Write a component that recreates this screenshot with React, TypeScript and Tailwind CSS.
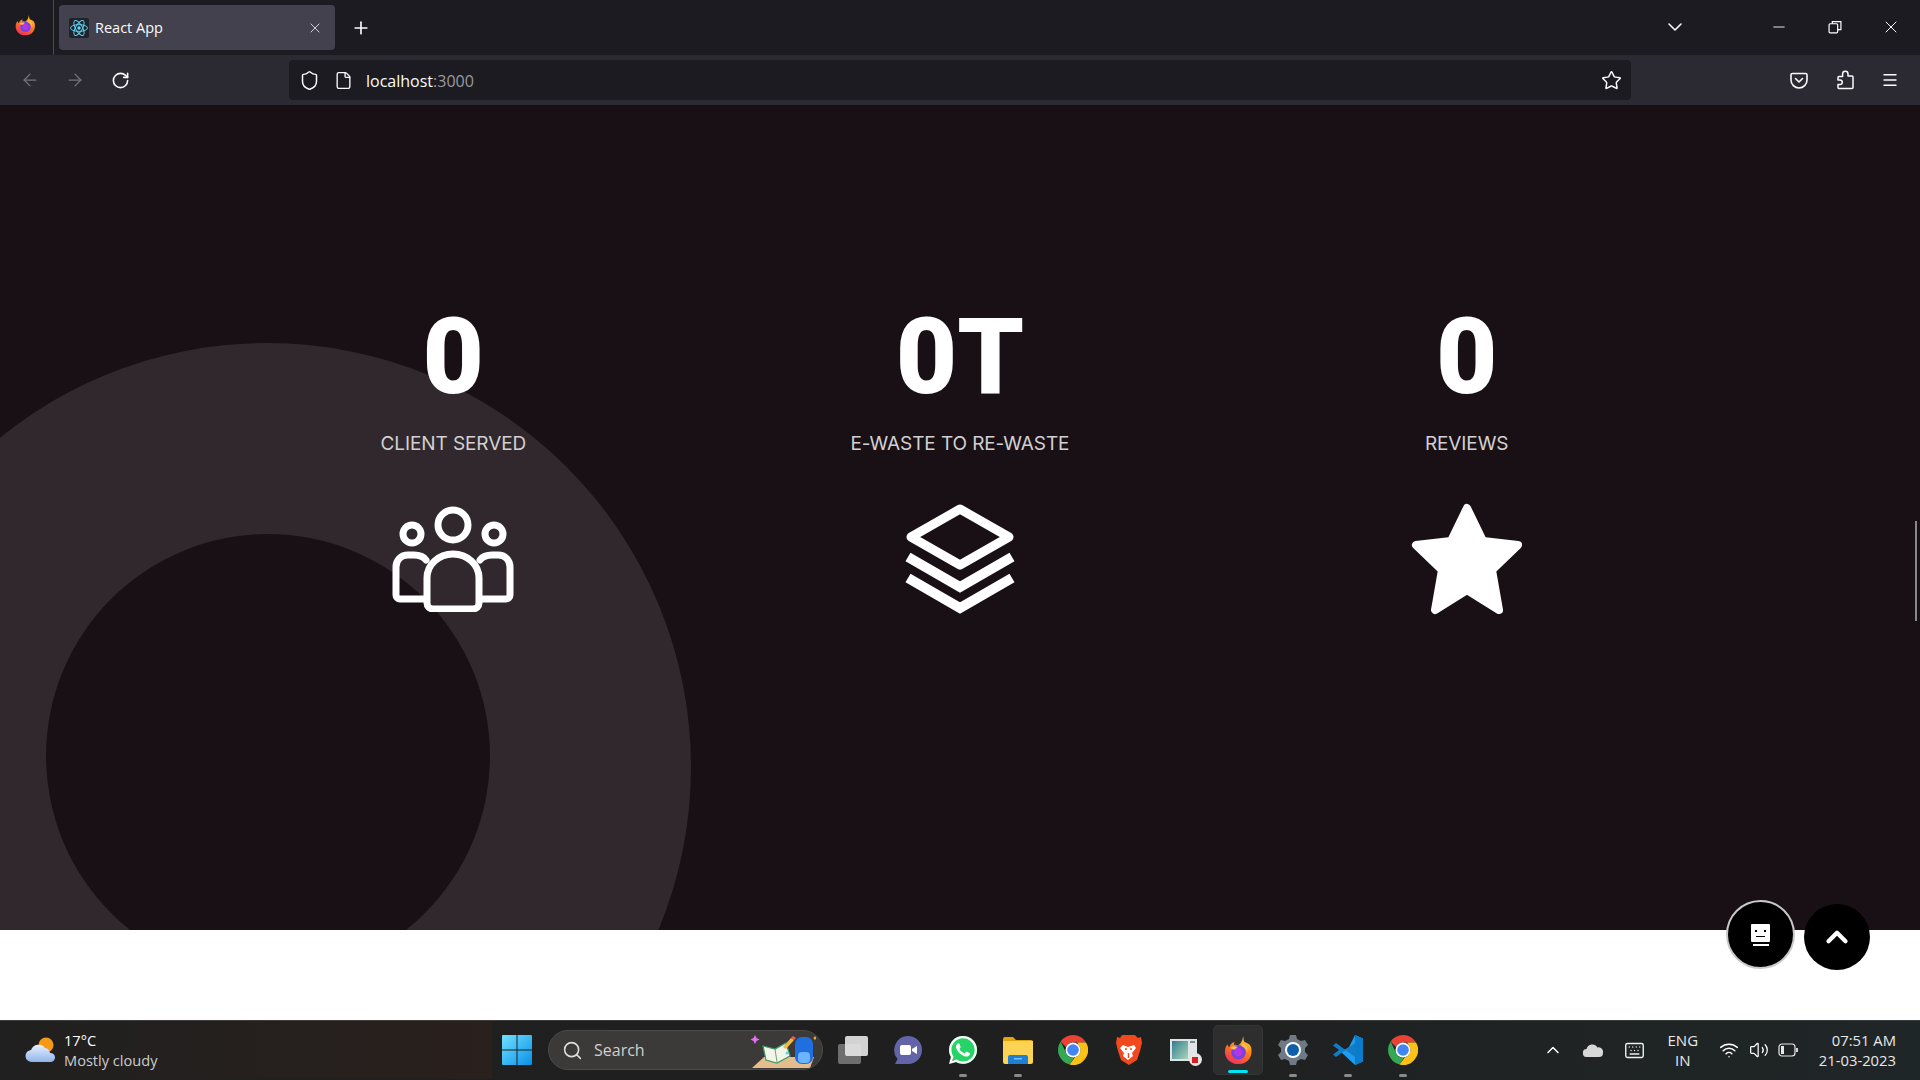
import { ArrowLeft, ArrowRight, RotateCw, Shield, File, Star, Menu, ChevronDown, ChevronUp, X, Minus, Plus, Search, Keyboard, Wifi, Volume2 } from 'lucide-react'
import { FaWhatsapp } from 'react-icons/fa'

function FirefoxLogo({ size = 20 }: { size?: number }) {
  return (
    <svg width={size} height={size} viewBox="0 0 32 32">
      <defs>
        <linearGradient id="ffa" x1="0.7" y1="0" x2="0.2" y2="1">
          <stop offset="0" stopColor="#ffd43b" />
          <stop offset="0.45" stopColor="#ff7a1a" />
          <stop offset="1" stopColor="#f0285f" />
        </linearGradient>
      </defs>
      <path d="M21 0c1 3 0 5 2 7 3 1 6 2 7 6 2 9-3 18-14 18C7 31 1 25 1 17c0-3 1-6 3-8 0 2 1 3 2 3 1-3 3-5 6-5-1 1-1 2-1 3 2-1 3 0 5 0 3-2 5-6 5-10z" fill="url(#ffa)" />
      <circle cx="16" cy="18" r="8" fill="#7542e5" />
      <circle cx="16" cy="18" r="4.5" fill="#b833e1" />
      <path d="M7 13c3-2 6-2 8-1l-3 3c-2 0-4 0-5-2z" fill="#ffbd4f" />
      <path d="M21 8c4 2 6 6 5 11-1-4-3-7-7-8z" fill="#ffbd4f" />
    </svg>
  )
}

function ReactIcon() {
  return (
    <svg width={20} height={20} viewBox="0 0 20 20" className="rounded-[2px] bg-[#20232a]">
      <circle cx="10" cy="10" r="1.7" fill="#61dafb" />
      <g fill="none" stroke="#61dafb" strokeWidth="0.9">
        <ellipse cx="10" cy="10" rx="8.5" ry="3.4" />
        <ellipse cx="10" cy="10" rx="8.5" ry="3.4" transform="rotate(60 10 10)" />
        <ellipse cx="10" cy="10" rx="8.5" ry="3.4" transform="rotate(120 10 10)" />
      </g>
    </svg>
  )
}

function ChromeLogo() {
  return (
    <svg width={30} height={30} viewBox="0 0 30 30">
      <path d="M15 0a15 15 0 0 1 13 7.5H15a7.5 7.5 0 0 0-7 4.7L2.700 6.500A15 15 0 0 1 15 0z" fill="#ea4335" />
      <path d="M2.700 6.500 8.500 18.700a7.500 7.500 0 0 0 7.700 3.800L11.500 29.600A15 15 0 0 1 2.700 6.500z" fill="#34a853" />
      <path d="M28 7.500A15 15 0 0 1 11.500 29.600l5.500-7.400a7.500 7.500 0 0 0 4.500-10.700L19 7.500z" fill="#fbc116" />
      <circle cx="15" cy="15" r="7.500" fill="#fff" />
      <circle cx="15" cy="15" r="5.800" fill="#4285f4" />
    </svg>
  )
}

function Dock({ children, dot }: { children: React.ReactNode; dot?: boolean }) {
  return (
    <div className="relative flex h-[50px] w-[50px] items-center justify-center">
      {children}
      {dot && <span className="absolute bottom-[-2px] h-[3px] w-[8px] rounded-full bg-[#8a8a8a]" />}
    </div>
  )
}

function SearchArt() {
  return (
    <svg width={66} height={36} viewBox="0 0 66 36" className="shrink-0">
      <path d="M2 36 14 25h50l-4 11z" fill="#e3bd8e" />
      <path d="M13 14l12 3 11-6 4 13-13 7-11-3z" fill="#f2f5ea" stroke="#3f9b63" strokeWidth="1.200" />
      <path d="M25 17l2 13" stroke="#7a9a80" />
      <path d="M33 15l8-9 3 2-8 9z" fill="#f8b73e" />
      <path d="M41 6l2-2 3 2-2 2z" fill="#ef5b4c" />
      <path d="M5 3l1.500 3 3 1.500-3 1.500L5 12 3.500 9 .5 7.500l3-1.500z" fill="#e56ff2" />
      <rect x="45" y="5" width="18" height="27" rx="7" fill="#1f6fe0" />
      <rect x="48" y="20" width="12" height="11" rx="4" fill="#6bb4ff" />
      <circle cx="37" cy="21" r="1.500" fill="#62d6e8" />
      <circle cx="65" cy="6" r="1.500" fill="#f5a623" />
    </svg>
  )
}

const stats = [
  { value: '0', label: 'CLIENT SERVED', icon: 'users' },
  { value: '0T', label: 'E-WASTE TO RE-WASTE', icon: 'layers' },
  { value: '0', label: 'REVIEWS', icon: 'star' },
]

function StatIcon({ name }: { name: string }) {
  if (name === 'users') {
    return (
      <svg width={122} height={106} viewBox="0 0 122 106" fill="none" stroke="#fff" strokeWidth="7" strokeLinejoin="round" strokeLinecap="round">
        <circle cx="61" cy="19" r="15" />
        <circle cx="20" cy="28" r="9" />
        <circle cx="102" cy="28" r="9" />
        <path d="M35 97V72a26 24 0 0 1 52 0v25a6 6 0 0 1-6 6H41a6 6 0 0 1-6-6z" />
        <path d="M34 93H8a4 4 0 0 1-4-4V61c0-7 5-12 12-12h6c5 0 9 1 12 5" />
        <path d="M88 93h26a4 4 0 0 0 4-4V61c0-7-5-12-12-12h-6c-5 0-9 1-12 5" />
      </svg>
    )
  }
  if (name === 'layers') {
    return (
      <svg width={112} height={110} viewBox="0 0 112 110" fill="none" stroke="#fff" strokeLinejoin="round">
        <path d="M56 5l49 28-49 28L7 33z" strokeWidth="9" />
        <path d="M4 53l52 30 52-30" strokeWidth="10" strokeLinejoin="miter" />
        <path d="M4 74l52 30 52-30" strokeWidth="10" strokeLinejoin="miter" />
      </svg>
    )
  }
  return (
    <svg width={114} height={114} viewBox="0 0 114 114">
      <path d="M57 6l16 33 35 4-26 25 7 40-32-20-32 20 7-40L6 43l35-4z" fill="#fff" stroke="#fff" strokeWidth="8" strokeLinejoin="round" />
    </svg>
  )
}

export default function App() {
  return (
    <div className="relative flex h-screen w-full flex-col overflow-hidden bg-white font-['Open_Sans',sans-serif]">
      {/* tab strip */}
      <div className="flex h-[55px] items-center bg-[#1c1b22] text-[#fbfbfe]">
        <div className="flex h-full w-[54px] items-center justify-center border-r border-[#4a4a52] pb-[4px] pr-[3px]">
          <FirefoxLogo size={21} />
        </div>
        <div className="ml-[5px] flex h-[45px] w-[276px] items-center rounded-[4px] bg-[#42414d] pl-[10px] pr-[12px]">
          <ReactIcon />
          <span className="ml-[6px] flex-1 text-[14.500px]">React App</span>
          <X size={16} strokeWidth={1.500} className="text-[#d0d0d4]" />
        </div>
        <Plus size={20} strokeWidth={2} className="ml-[16px]" />
        <div className="flex-1" />
        <ChevronDown size={24} strokeWidth={1.600} className="mr-[83px] mb-[2px]" />
        <Minus size={18} strokeWidth={1.200} className="mr-[40px] mb-[2px]" />
        <svg width={14} height={14} viewBox="0 0 13 13" fill="none" stroke="#fff" strokeWidth="1.100" className="mr-[39px] mb-[2px]">
          <rect x="1" y="3.500" width="8" height="8.500" rx="1" />
          <path d="M4 3.500V1.500h8V9H9" />
        </svg>
        <X size={20} strokeWidth={1.200} className="mr-[19px] mb-[2px]" />
      </div>

      {/* toolbar */}
      <div className="flex h-[50px] items-center bg-[#2b2a33] text-[#fbfbfe]">
        <div className="flex w-[289px] items-center pl-[20px]">
          <ArrowLeft size={20} strokeWidth={1.500} className="text-[#75747c]" />
          <ArrowRight size={20} strokeWidth={1.500} className="ml-[25px] text-[#75747c]" />
          <RotateCw size={19} strokeWidth={2} className="ml-[26px]" />
        </div>
        <div className="flex h-[40px] w-[1342px] items-center rounded-[4px] bg-[#1c1b22] pl-[10px] pr-[9px]">
          <Shield size={21} strokeWidth={1.700} />
          <File size={19} strokeWidth={1.700} className="ml-[14px]" />
          <span className="ml-[13px] mt-[2px] flex-1 text-[16px]">
            localhost<span className="text-[#9a9aa0]">:3000</span>
          </span>
          <Star size={21} strokeWidth={1.700} />
        </div>
        <div className="flex flex-1 items-center justify-end pr-[21px]">
          <svg width={18} height={17} viewBox="0 0 18 17" fill="none" stroke="#fbfbfe" strokeWidth="1.600" strokeLinecap="round" strokeLinejoin="round" className="mr-[28px]">
            <path d="M2.500 1.500h13a1.500 1.500 0 0 1 1.500 1.500v5a8 8 0 0 1-16 0V3a1.500 1.500 0 0 1 1.500-1.500z" />
            <path d="M5.500 6.500 9 10l3.500-3.500" />
          </svg>
          <svg width={18} height={20} viewBox="0 0 18 20" fill="none" stroke="#fbfbfe" strokeWidth="1.500" strokeLinejoin="round" className="mr-[27px]">
            <path d="M6 18.500h10a1 1 0 0 0 1-1V7a1 1 0 0 0-1-1h-4V4a2.700 2.700 0 0 0-5.400 0v2.500H3a1 1 0 0 0-1 1V10h2a2.200 2.200 0 0 1 0 4.500H2v3a1 1 0 0 0 1 1z" />
          </svg>
          <Menu size={18} strokeWidth={1.800} />
        </div>
      </div>

      {/* stats section */}
      <section className="relative h-[825px] shrink-0 overflow-hidden bg-[#181015]">
        <div className="absolute left-[-157px] top-[238px] flex h-[848px] w-[848px] items-center justify-center rounded-full bg-[#30282c]">
          <div className="ml-[2px] mt-[-22px] h-[444px] w-[444px] rounded-full bg-[#181015]" />
        </div>
        <div className="relative mx-auto grid w-[1520px] grid-cols-3 pt-[187px] text-center">
          {stats.map((s) => (
            <div key={s.label} className="flex flex-col items-center">
              <div className="h-[130px] font-['Roboto',sans-serif] text-[106px] font-black leading-[130px] text-white">{s.value}</div>
              <div className="mt-[7px] h-[30px] font-['Inter',sans-serif] text-[19px] leading-[30px] tracking-[-0.1px] text-[#d2d0d2]">{s.label}</div>
              <div className="mt-[43px] flex h-[114px] items-center justify-center">
                <StatIcon name={s.icon} />
              </div>
            </div>
          ))}
        </div>
        <div className="absolute right-[3px] top-[416px] h-[100px] w-[2px] bg-[#8a888a]" />
      </section>

      <div className="h-[90px] shrink-0 bg-white" />

      {/* floating buttons */}
      <button className="absolute left-[1726px] top-[900px] flex h-[69px] w-[69px] flex-col items-center justify-center rounded-full border-2 border-[#c9c9c9] bg-black">
        <span className="relative block h-[18px] w-[19px] rounded-[1px] bg-white">
          <span className="absolute left-[4px] top-[6px] h-[2px] w-[2px] bg-black" />
          <span className="absolute right-[4px] top-[6px] h-[2px] w-[2px] bg-black" />
          <span className="absolute left-[5px] top-[12px] h-[1px] w-[9px] bg-black" />
        </span>
        <span className="mt-[2px] block h-[2px] w-[16px] bg-white" />
      </button>
      <button className="absolute left-[1804px] top-[904px] flex h-[66px] w-[66px] items-center justify-center rounded-full bg-black">
        <ChevronUp size={34} strokeWidth={3} className="text-white" />
      </button>

      {/* taskbar */}
      <div className="flex h-[60px] shrink-0 items-center border-t border-[#3c3c3c] bg-gradient-to-r from-[#202020] via-[#1f1f1f] to-[#1f2627] pb-[1px] text-white">
        <div className="flex h-full w-[492px] items-center bg-gradient-to-r from-[#202020] to-[#2a201d] pl-[25px]">
          <svg width={31} height={26} viewBox="0 0 31 26">
            <defs>
              <linearGradient id="cl" x1="0" y1="0" x2="0" y2="1">
                <stop offset="0" stopColor="#e8f1fb" />
                <stop offset="1" stopColor="#8fb4ea" />
              </linearGradient>
            </defs>
            <circle cx="21" cy="8" r="7.500" fill="#f59a16" />
            <path d="M7 25a6 6 0 0 1-1-12 8 8 0 0 1 14-2 6 6 0 0 1 5 5 4.500 4.500 0 0 1 1 9z" fill="url(#cl)" />
          </svg>
          <div className="ml-[8px] mt-[-1px] text-[14.600px] leading-[20px]">
            <div>17°C</div>
            <div className="text-[#cccccc]">Mostly cloudy</div>
          </div>
        </div>
        <div className="flex items-center">
          <svg width={30} height={30} viewBox="0 0 30 30" className="ml-[10px]">
            <defs>
              <linearGradient id="win" x1="0" y1="0" x2="1" y2="1">
                <stop offset="0" stopColor="#6fe2ff" />
                <stop offset="1" stopColor="#0a8fe8" />
              </linearGradient>
            </defs>
            <path d="M0 1a1 1 0 0 1 1-1h13.500v14.500H0zM15.500 0H29a1 1 0 0 1 1 1v13.500H15.500zM0 15.500h14.500V30H1a1 1 0 0 1-1-1zM15.500 15.500H30V29a1 1 0 0 1-1 1H15.500z" fill="url(#win)" />
          </svg>
          <div className="ml-[16px] flex h-[40px] w-[275px] items-center overflow-hidden rounded-full border border-[#4a4a4a] bg-[#3c3a39] pl-[13px] pr-[6px]">
            <Search size={21} strokeWidth={1.800} className="text-[#dddddd]" />
            <span className="ml-[11px] flex-1 text-[16px] text-[#cfcfcf]">Search</span>
            <SearchArt />
          </div>
          <div className="ml-[5px] flex items-center gap-[5px]">
            <Dock>
              <div className="relative h-[28px] w-[30px]">
                <div className="absolute bottom-0 left-0 h-[20px] w-[23px] rounded-[2px] bg-[#6e6e6e]" />
                <div className="absolute right-0 top-0 h-[20px] w-[23px] rounded-[2px] bg-[#e6e6e6]/90" />
              </div>
            </Dock>
            <Dock>
              <svg width={30} height={30} viewBox="0 0 30 30">
                <path d="M15 1a14 14 0 0 1 0 28H2l2.500-5A14 14 0 0 1 15 1z" fill="#6264a7" />
                <rect x="7" y="10" width="11" height="10" rx="2" fill="#fff" />
                <path d="M19 14l5-3v8l-5-3z" fill="#fff" />
              </svg>
            </Dock>
            <Dock dot>
              <div className="flex h-[28px] w-[28px] items-center justify-center rounded-full bg-[#25d366]">
                <FaWhatsapp size={32} className="text-white" />
              </div>
            </Dock>
            <Dock dot>
              <svg width={30} height={28} viewBox="0 0 30 28">
                <path d="M0 3a2 2 0 0 1 2-2h8l3 3h15a2 2 0 0 1 2 2v3H0z" fill="#e3a40d" />
                <path d="M0 5h30v21a2 2 0 0 1-2 2H2a2 2 0 0 1-2-2z" fill="#fcd353" />
                <path d="M5 21a2 2 0 0 1 2-2h16a2 2 0 0 1 2 2v7H5z" fill="#1d7fd6" />
                <rect x="11" y="22" width="8" height="1.500" fill="#7ac0f5" />
              </svg>
            </Dock>
            <Dock><ChromeLogo /></Dock>
            <Dock>
              <svg width={27} height={30} viewBox="0 0 27 30">
                <path d="M7 0h13l3 3 3-1 1 6-2 8-3 9-8 5-8-5-3-9-2-8 1-6 3 1z" fill="#f1491d" />
                <path d="M8 10l5 2 6-2 2 3-4 5 1 3-5 4-5-4 1-3-4-5z" fill="#fff" />
                <path d="M13.500 18v5M10 14h2M15 14h2" stroke="#f1491d" strokeWidth="1.500" />
              </svg>
            </Dock>
            <Dock>
              <div className="relative flex h-[22px] w-[27px] gap-[2px] bg-[#dfe4e6] p-[2px]">
                <div className="h-full w-[16px] bg-gradient-to-br from-[#2f7f8f] to-[#a9d4b8]" />
                <div className="h-[2px] w-[5px] bg-[#7d8a8f]" />
                <div className="absolute bottom-[-5px] right-[-5px] flex h-[13px] w-[13px] items-center justify-center rounded-full bg-[#e6e6e6]">
                  <span className="h-[6px] w-[6px] bg-[#d81e1e]" />
                </div>
              </div>
            </Dock>
            <div className="relative flex h-[50px] w-[50px] items-center justify-center rounded-[5px] border border-[#353535] bg-[#2e2e2e]">
              <FirefoxLogo size={29} />
              <span className="absolute bottom-[1px] h-[3px] w-[20px] rounded-full bg-[#00e5f5]" />
            </div>
            <Dock dot>
              <svg width={30} height={30} viewBox="0 0 30 30">
                <path d="M12 0h6l1 4 4 2 4-1 3 5-3 3v4l3 3-3 5-4-1-4 2-1 4h-6l-1-4-4-2-4 1-3-5 3-3v-4l-3-3 3-5 4 1 4-2z" fill="#6f7a86" />
                <circle cx="15" cy="15" r="8" fill="#fff" />
                <circle cx="15" cy="15" r="6" fill="#0f5ea8" />
              </svg>
            </Dock>
            <Dock dot>
              <svg width={30} height={30} viewBox="0 0 30 30">
                <path d="M22 0l8 3.500v23L22 30 8 17l8-5z" fill="#1f9cf0" />
                <path d="M22 0v30l8-3.500v-23z" fill="#0a7cc9" />
                <path d="M22 8v14L3 8 0 10.500l6 4.500-6 4.500L3 22z" fill="#0f7ec6" />
              </svg>
            </Dock>
            <Dock dot><ChromeLogo /></Dock>
          </div>
        </div>
        <div className="flex flex-1 items-center justify-end pr-[24px]">
          <ChevronUp size={20} strokeWidth={1.800} className="mr-[20px]" />
          <svg width={20} height={13} viewBox="0 0 20 13" className="mr-[21px]">
            <path d="M4 13a4 4 0 0 1-.500-8 6 6 0 0 1 11-1.500A4.500 4.500 0 0 1 20 9a4 4 0 0 1-4 4z" fill="#d8d8d8" />
          </svg>
          <Keyboard size={21} strokeWidth={1.600} className="mr-[22px] text-[#f0f0f0]" />
          <div className="mr-[20px] w-[32px] text-center text-[15px] leading-[20px] text-[#e8e8e8]">ENG<br />IN</div>
          <Wifi size={20} strokeWidth={1.800} className="mr-[10px]" />
          <Volume2 size={20} strokeWidth={1.500} className="mr-[9px]" />
          <svg width={20} height={14} viewBox="0 0 20 14" fill="none" stroke="#e8e8e8" strokeWidth="1.200" className="mr-[21px]">
            <rect x="1" y="1" width="16" height="12" rx="3" />
            <rect x="3" y="3" width="3" height="8" fill="#e8e8e8" stroke="none" />
            <path d="M19 5v4" strokeWidth="1.800" />
          </svg>
          <div className="text-right text-[14.800px] leading-[20px] text-[#e8e8e8]">
            <div>07:51 AM</div>
            <div>21-03-2023</div>
          </div>
        </div>
      </div>
    </div>
  )
}
